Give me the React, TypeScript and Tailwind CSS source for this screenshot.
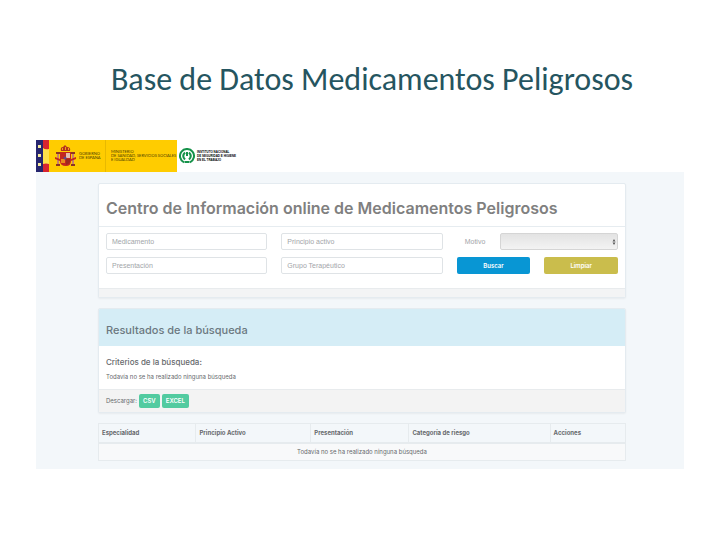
import type { ReactNode } from "react";

const stars = [5, 14, 23];

function SpainBanner() {
  return (
    <div className="flex h-8 w-[141px] items-center bg-[#ffcc00] font-[Lato,sans-serif] text-[4px] leading-[4px] text-[#4a3c00]">
      <svg className="h-8 w-[43px] shrink-0" viewBox="0 0 43 32" role="img" aria-label="Escudo de España">
        <rect width="8" height="32" fill="#26256e" />
        <rect x="7" width="6" height="32" fill="#ffe14a" />
        <path d="M7 0h6v9q-4 1-6-1zM7 24q3-1 6 0v8H7z" fill="#d8232f" />
        {stars.map((y) => (
          <rect key={y} x="2" y={y} width="3" height="3" fill="#f4e9a0" />
        ))}
        <rect x="21" y="14" width="2" height="10" fill="#c9836b" />
        <rect x="36" y="14" width="2" height="10" fill="#c9836b" />
        <path d="M20 12h4v2h-4zM35 12h4v2h-4zM20 24h4v2h-4zM35 24h4v2h-4z" fill="#8d3524" />
        <path d="M19 17l5 2v2l-5-2zM40 17l-5 2v2l5-2z" fill="#c4281f" />
        <path d="M25 11q-1-4 2-4l2-2 2 2q4 0 3 4z" fill="#b3321f" />
        <path d="M26 8h1v2h-1zM29 7h1v3h-1zM32 8h1v2h-1z" fill="#f0a31b" />
        <path d="M24 12h11v9q0 5-5 5-6 0-6-5z" fill="#c3271f" />
        <path d="M30 13h4v5h-4z" fill="#e5bdb0" />
        <path d="M25 19h4v4h-4z" fill="#e98a1d" />
        <path d="M30 19h4v3q-1 2-4 3z" fill="#9c2820" />
        <circle cx="29" cy="18" r="1.500" fill="#5a4a8d" />
      </svg>
      <p className="w-[26px] shrink-0">GOBIERNO<br />DE ESPAÑA</p>
      <div className="h-full w-px bg-[#e8b900]" />
      <p className="pl-[5px] whitespace-nowrap">MINISTERIO<br />DE SANIDAD, SERVICIOS SOCIALES<br />E IGUALDAD</p>
    </div>
  );
}

function InstituteLogo() {
  return (
    <div className="flex h-8 items-center gap-[2px] pl-[2px]">
      <svg className="size-4" viewBox="0 0 16 16" fill="none" role="img" aria-label="Instituto Nacional de Seguridad e Higiene en el Trabajo">
        <path d="M5 14.3A7 7 0 1 1 11 14.3" stroke="#16924a" strokeWidth="2" />
        <path d="M6 4.500Q2.500 8 6 11.500M10 4.500Q13.500 8 10 11.500" stroke="#16924a" strokeWidth="2" />
        <path d="M8 4v4" stroke="#16924a" strokeWidth="2" />
        <path d="M5.500 14h5" stroke="#16924a" strokeWidth="2" />
      </svg>
      <p className="text-[3px] leading-[4px] font-bold text-black">INSTITUTO NACIONAL<br />DE SEGURIDAD E HIGIENE<br />EN EL TRABAJO</p>
    </div>
  );
}

function Card({ children }: { children: ReactNode }) {
  return <section className="overflow-hidden rounded-xs border border-[#e4ebf0] bg-white shadow-xs">{children}</section>;
}

function Field({ label }: { label: string }) {
  return (
    <input
      type="text"
      aria-label={label}
      placeholder={label}
      className="h-[17px] w-full min-w-0 rounded-xs border border-[#dfe3e6] bg-white px-[5px] font-['Liberation_Sans',Arial,sans-serif] text-[7px] outline-none placeholder:text-[#a2a5a9]"
    />
  );
}

const columns = [
  { name: "Especialidad", width: "w-[18.5%]" },
  { name: "Principio Activo", width: "w-[21.8%]" },
  { name: "Presentación", width: "w-[18.6%]" },
  { name: "Categoría de riesgo", width: "w-[26.8%]" },
  { name: "Acciones", width: "w-[14.3%]" },
];

export default function App() {
  return (
    <main className="min-h-screen bg-white px-9 pt-[59px] font-['Liberation_Sans',Arial,sans-serif] text-[#66696c]">
      <h1 className="pl-6 text-center font-[Carlito,Lato,sans-serif] text-[32px] leading-[42px] text-[#255560]">
        Base de Datos Medicamentos Peligrosos
      </h1>

      <div className="mt-[39px]">
        <header className="flex">
          <SpainBanner />
          <InstituteLogo />
        </header>

        <div className="bg-[#f3f7fa] pt-[11px] pr-[58px] pb-2 pl-[62px] font-[Inter,sans-serif] text-[6px] leading-[10px]">
          <Card>
            <h2 className="border-b border-[#e6ecf0] px-[7px] pt-3 pb-[6px] text-[16px] leading-6 font-semibold text-[#808080]">
              Centro de Información online de Medicamentos Peligrosos
            </h2>
            <form className="grid grid-cols-3 gap-x-[14px] gap-y-[7px] px-[7px] pt-[6px] pb-[14px]">
              <Field label="Medicamento" />
              <Field label="Principio activo" />
              <div className="flex items-center">
                <label htmlFor="motivo" className="w-[43px] pl-2 font-['Liberation_Sans',Arial,sans-serif] text-[7px] text-[#a2a5a9]">Motivo</label>
                <div className="relative flex-1">
                  <select id="motivo" className="block h-[17px] w-full appearance-none rounded-xs border border-[#d5d5d5] bg-linear-to-b from-[#e3e3e3] to-[#f3f3f3]">
                    <option></option>
                  </select>
                  <svg className="pointer-events-none absolute top-[6px] right-[2px] h-[6px] w-1" viewBox="0 0 4 6" fill="#5b5b5b" aria-hidden="true">
                    <path d="M2 0L3.500 2.500H.5zM.5 3.500h3L2 6z" />
                  </svg>
                </div>
              </div>
              <Field label="Presentación" />
              <Field label="Grupo Terapéutico" />
              <div className="grid grid-cols-2 gap-[14px] font-semibold text-white">
                <button type="button" className="h-[17px] rounded-xs bg-[#0896d4]">Buscar</button>
                <button type="button" className="h-[17px] rounded-xs bg-[#cabd4c]">Limpiar</button>
              </div>
            </form>
            <div className="h-[9px] border-t border-[#e8ebed] bg-[#f3f4f5]" />
          </Card>

          <div className="mt-[10px]">
            <Card>
              <h3 className="bg-[#d5edf6] px-[7px] pt-[13px] pb-2 text-[11px] leading-4 font-medium text-[#6b7880]">
                Resultados de la búsqueda
              </h3>
              <div className="px-[7px] pt-[11px] pb-[7px]">
                <h4 className="text-[8px] leading-[10px] font-medium">Criterios de la búsqueda:</h4>
                <p className="mt-[5px]">Todavía no se ha realizado ninguna búsqueda</p>
              </div>
              <div className="flex items-center gap-[2px] border-t border-[#e8ebed] bg-[#f3f3f3] px-[7px] py-[4px]">
                <span>Descargar:</span>
                <button type="button" className="h-[14px] rounded-xs bg-[#52cba0] px-[4px] font-semibold text-white">CSV</button>
                <button type="button" className="h-[14px] rounded-xs bg-[#52cba0] px-[4px] font-semibold text-white">EXCEL</button>
              </div>
            </Card>
          </div>

          <table className="mt-[10px] w-full table-fixed border-collapse border border-[#e6ebee]">
            <thead>
              <tr className="h-[19px] border-b-2 border-[#e6ebee]">
                {columns.map((c) => (
                  <th key={c.name} scope="col" className={`${c.width} border-r border-[#e6ebee] px-[3px] text-left font-bold`}>{c.name}</th>
                ))}
              </tr>
            </thead>
            <tbody>
              <tr className="h-[18px] bg-[#f8f9fa]">
                <td colSpan={5} className="text-center">Todavía no se ha realizado ninguna búsqueda</td>
              </tr>
            </tbody>
          </table>
        </div>
      </div>
    </main>
  );
}
